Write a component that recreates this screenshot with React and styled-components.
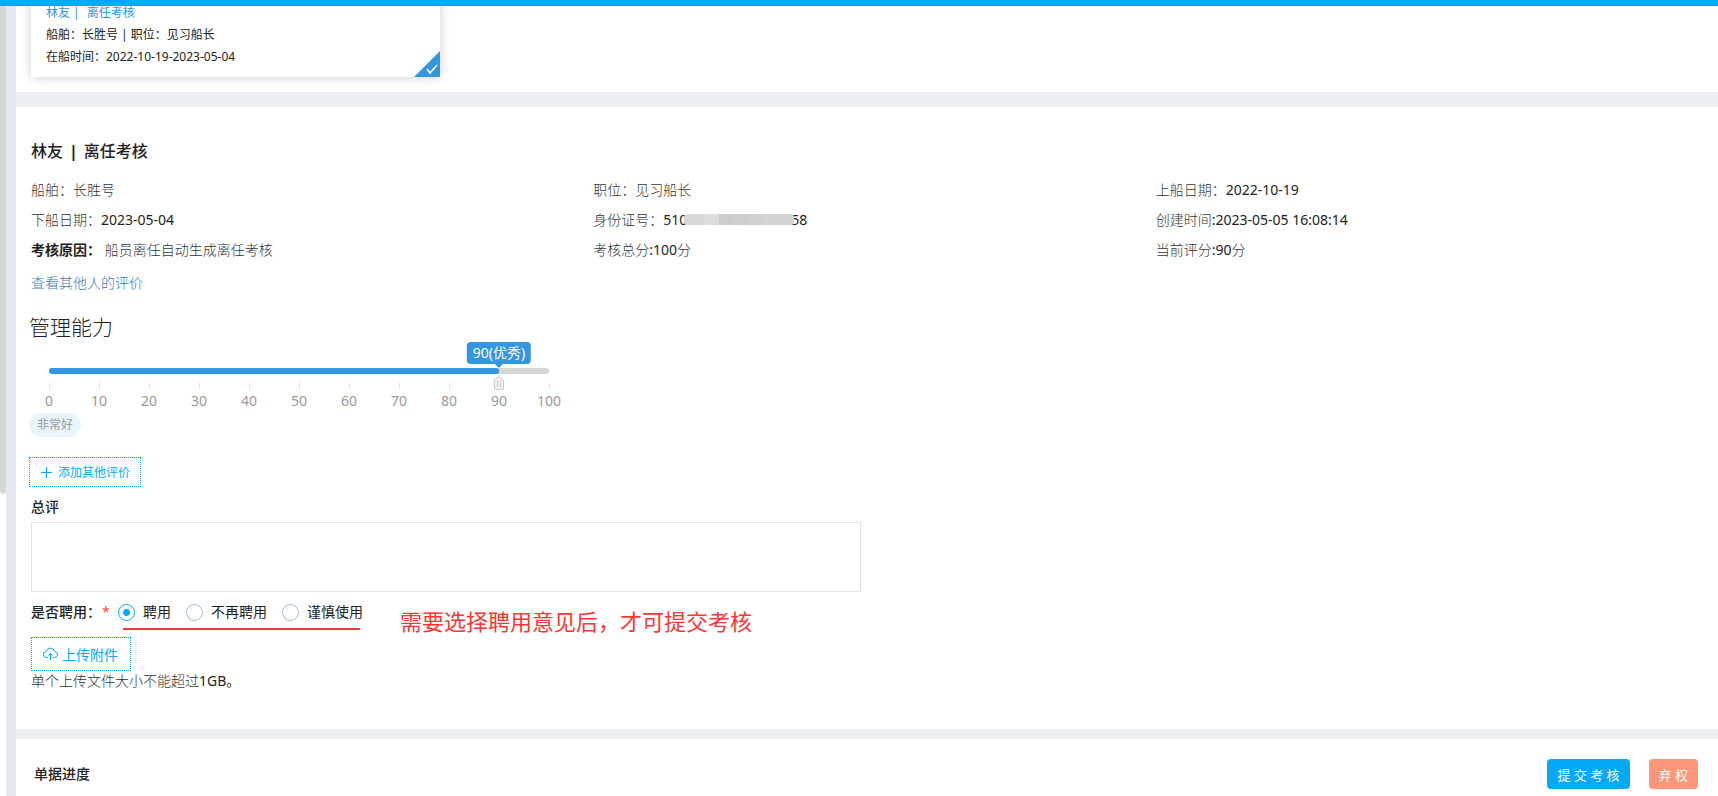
import React, { useState } from "react";
import styled, { createGlobalStyle } from "styled-components";

const GlobalStyle = createGlobalStyle`
  * {
    box-sizing: border-box;
  }
  body {
    margin: 0;
    background: #ebeff4;
    color: #222;
    font: 14px/30px "Noto Sans", "Noto Sans CJK SC", sans-serif;
  }
  button, input, textarea {
    font-family: inherit;
    margin: 0;
  }
`;

const TopBar = styled.div`
  position: fixed;
  top: 0;
  left: 0;
  right: 0;
  height: 6px;
  background: #03a9f4;
  z-index: 2;
`;

const Page = styled.div`
  display: flex;
  min-height: 100vh;
`;

const ScrollTrack = styled.div`
  flex: none;
  width: 6px;
  background: #fff;
`;

const ScrollThumb = styled.div`
  height: 62vh;
  border-radius: 0 0 3px 3px;
  background: #d6d6d6;
`;

const Main = styled.main`
  flex: 1;
  min-width: 0;
  display: flex;
  flex-direction: column;
  border-left: 10px solid #e5e9ef;
`;

const ListPanel = styled.section`
  background: #fff;
  padding: 0 15px 15px;
`;

const PersonCard = styled.div`
  position: relative;
  max-width: 409px;
  padding: 2px 15px 9px;
  background: #fff;
  box-shadow: 0 0 10px rgba(0, 0, 0, 0.2);
  font-size: 12px;
  line-height: 22px;
`;

const CardName = styled.div`
  display: flex;
  gap: 7px;
  color: #3296e1;
`;

const Corner = styled.svg`
  position: absolute;
  right: 0;
  bottom: 0;
`;

const DetailPanel = styled.section`
  margin-top: 15px;
  padding: 29px 0 38px 15px;
  background: #fff;
`;

const Title = styled.h1`
  display: flex;
  gap: 6px;
  margin: 0 0 9px;
  font-size: 16px;
  font-weight: 500;
  line-height: 30px;
`;

const Info = styled.div`
  display: grid;
  grid-template-columns: repeat(3, 1fr);
`;

const Label = styled.span`
  color: #333;
  font-weight: 300;
`;

const Mask = styled.span`
  display: inline-block;
  width: 110px;
  height: 11px;
  margin: 0 -3px;
  position: relative;
  border-radius: 4px;
  background: linear-gradient(
    90deg,
    #d6d8da 0 20px,
    #dcdedd 20px 35px,
    #cccccc 35px 50px,
    #d0cecd 50px 65px,
    #cfd1d3 65px 80px,
    #d3d3d4 80px
  );
`;

const OtherLink = styled.a`
  display: block;
  width: fit-content;
  margin-top: 3px;
  color: #3f78b5;
  font-weight: 300;
  text-decoration: none;
`;

const SkillTitle = styled.h2`
  margin: 14px 0 0 -2px;
  font-size: 21px;
  font-weight: 300;
  line-height: 30px;
`;

const Slider = styled.div`
  position: relative;
  width: 500px;
  max-width: 90%;
  margin: 26px 0 0 18px;
`;

const Rail = styled.div`
  height: 6px;
  border-radius: 3px;
  background: #d6d6d6;
`;

const Fill = styled.div`
  height: 6px;
  border-radius: 3px;
  background: #3296e1;
`;

const Bubble = styled.output`
  position: absolute;
  bottom: 100%;
  transform: translateX(-50%);
  margin-bottom: 4px;
  padding: 0 6px;
  border-radius: 4px;
  background: #3296e1;
  color: #fff;
  line-height: 22px;
  white-space: nowrap;

  &::after {
    content: "";
    position: absolute;
    left: 50%;
    top: 100%;
    margin-left: -4px;
    border: 4px solid transparent;
    border-top-color: #3296e1;
  }
`;

const BubbleTrack = styled.div`
  position: absolute;
  top: 0;
  left: 0;
  right: 0;
`;

const thumbSvg = encodeURIComponent(
  `<svg xmlns="http://www.w3.org/2000/svg" width="10" height="14"><path d="M.5 4.500 4 1h2l3.500 3.500v7.500a1.500 1.500 0 0 1-1.500 1.500H2A1.500 1.500 0 0 1 .5 12z" fill="#f4f4f4" stroke="#cacaca"/><path d="M3.500 4.500v6.500M6.500 4.500v6.500" stroke="#cacaca"/></svg>`
);

const Range = styled.input`
  appearance: none;
  position: absolute;
  top: 8px;
  left: -5px;
  width: calc(100% + 10px);
  height: 14px;
  background: transparent;
  cursor: pointer;

  &::-webkit-slider-thumb {
    appearance: none;
    width: 10px;
    height: 14px;
    background: url("data:image/svg+xml,${thumbSvg}");
  }
`;

const Scale = styled.div`
  display: flex;
  justify-content: space-between;
  margin-top: 9px;
`;

const Mark = styled.div`
  display: flex;
  flex-direction: column;
  align-items: center;
  width: 0;
  color: #999;
  line-height: 24px;

  &::before {
    content: "";
    flex: none;
    width: 1px;
    height: 6px;
    background: #e0e0e0;
  }
`;

const Tag = styled.span`
  display: block;
  width: fit-content;
  margin-left: -2px;
  padding: 0 8px;
  border-radius: 12px;
  background: #e9f5fc;
  color: #999;
  font-size: 12px;
  line-height: 24px;
`;

const DottedButton = styled.button`
  display: flex;
  align-items: center;
  gap: ${(props) => (props.$small ? "6px" : "4px")};
  height: ${(props) => (props.$small ? "30px" : "34px")};
  margin: ${(props) => (props.$small ? "20px 0 5px -2px" : "10px 0 0")};
  padding: ${(props) => (props.$small ? "0 10px 0 11px" : "0 12px 0 11px")};
  border: 1px dotted #03a9f4;
  background: #fff;
  color: #03a9f4;
  font-size: ${(props) => (props.$small ? "12px" : "14px")};
  cursor: pointer;
`;

const FieldLabel = styled.label`
  display: block;
  font-weight: 500;
`;

const Comment = styled.textarea`
  display: block;
  width: 100%;
  max-width: 830px;
  height: 70px;
  border: 1px solid #e0e3e7;
  resize: none;
`;

const HireRow = styled.div`
  position: relative;
  display: flex;
  align-items: center;
  height: 30px;
  margin-top: 5px;
`;

const Star = styled.span`
  width: 16px;
  color: #f0513c;
`;

const HireLabel = styled.span`
  width: 71px;
  font-weight: 500;
`;

const Option = styled.label`
  display: flex;
  align-items: center;
  gap: 8px;
  margin-right: 15px;
`;

const Radio = styled.input`
  appearance: none;
  width: 17px;
  height: 17px;
  border: 1px solid #9db9d6;
  border-radius: 50%;

  &:checked {
    border-color: #03a9f4;
    background: radial-gradient(circle, #03a9f4 3px, transparent 4px);
  }
`;

const Underline = styled.div`
  position: absolute;
  left: 92px;
  top: 31px;
  width: 237px;
  height: 2px;
  background: #ff3535;
`;

const Note = styled.div`
  position: absolute;
  left: 369px;
  top: 9px;
  color: #ff3535;
  font-size: 22px;
  white-space: nowrap;
`;

const Hint = styled.p`
  margin: 0;
  line-height: 20px;
`;

const Footer = styled.footer`
  flex: 1;
  display: flex;
  align-items: flex-start;
  gap: 19px;
  margin-top: 10px;
  padding: 20px 20px 8px 18px;
  background: #fff;
`;

const FooterTitle = styled.h3`
  flex: 1;
  margin: 0;
  font-size: 14px;
  font-weight: 500;
`;

const ActionButton = styled.button`
  height: 30px;
  padding: 0 10px;
  border: 0;
  border-radius: 4px;
  background: ${(props) => props.$color};
  color: #fff;
  font-size: 13px;
  cursor: pointer;
`;

const marks = [0, 10, 20, 30, 40, 50, 60, 70, 80, 90, 100];
const hireOptions = ["聘用", "不再聘用", "谨慎使用"];

function ScoreSlider() {
  const [score, setScore] = useState(90);

  return (
    <Slider>
      <Rail>
        <Fill style={{ width: `${score}%` }} />
      </Rail>
      <BubbleTrack>
        <Bubble style={{ left: `${score}%` }}>{score}(优秀)</Bubble>
      </BubbleTrack>
      <Range
        type="range"
        aria-label="管理能力"
        value={score}
        onChange={(e) => setScore(Number(e.target.value))}
      />
      <Scale>
        {marks.map((mark) => (
          <Mark key={mark}>{mark}</Mark>
        ))}
      </Scale>
    </Slider>
  );
}

function App() {
  const [hire, setHire] = useState("聘用");

  return (
    <>
      <GlobalStyle />
      <TopBar />
      <Page>
        <ScrollTrack>
          <ScrollThumb />
        </ScrollTrack>
        <Main>
          <ListPanel>
            <PersonCard>
              <CardName>
                <span>林友 |</span>
                <span>离任考核</span>
              </CardName>
              <div>船舶：长胜号 | 职位：见习船长</div>
              <div>在船时间：2022-10-19-2023-05-04</div>
              <Corner width="26" height="26" viewBox="0 0 26 26">
                <path d="M26 0v26H0z" fill="#3296e1" />
                <path d="m13 18 3 4 7-8" fill="none" stroke="#fff" strokeWidth="1.5" />
              </Corner>
            </PersonCard>
          </ListPanel>

          <DetailPanel>
            <Title>
              <span>林友</span>
              <b>|</b>
              <span>离任考核</span>
            </Title>
            <Info>
              <Label>船舶：长胜号</Label>
              <Label>职位：见习船长</Label>
              <div>
                <Label>上船日期：</Label>2022-10-19
              </div>
              <div>
                <Label>下船日期：</Label>2023-05-04
              </div>
              <div>
                <Label>身份证号：</Label>510
                <Mask />
                58
              </div>
              <div>
                <Label>创建时间</Label>:2023-05-05 16:08:14
              </div>
              <div>
                <b>考核原因：</b> <Label>船员离任自动生成离任考核</Label>
              </div>
              <div>
                <Label>考核总分</Label>:100<Label>分</Label>
              </div>
              <div>
                <Label>当前评分</Label>:90<Label>分</Label>
              </div>
            </Info>
            <OtherLink href="#">查看其他人的评价</OtherLink>

            <SkillTitle>管理能力</SkillTitle>
            <ScoreSlider />
            <Tag>非常好</Tag>
            <DottedButton type="button" $small>
              <svg width="11" height="11" viewBox="0 0 11 11">
                <path d="M5.500 0v11M0 5.500h11" stroke="#03a9f4" />
              </svg>
              添加其他评价
            </DottedButton>

            <FieldLabel htmlFor="comment">总评</FieldLabel>
            <Comment id="comment" />

            <HireRow role="radiogroup" aria-label="是否聘用">
              <HireLabel>是否聘用：</HireLabel>
              <Star>*</Star>
              {hireOptions.map((option) => (
                <Option key={option}>
                  <Radio
                    type="radio"
                    name="hire"
                    checked={hire === option}
                    onChange={() => setHire(option)}
                  />
                  {option}
                </Option>
              ))}
              <Underline />
              <Note>需要选择聘用意见后，才可提交考核</Note>
            </HireRow>

            <DottedButton type="button">
              <svg width="15" height="14" viewBox="0 0 15 14" fill="none" stroke="#03a9f4">
                <path d="M5 10.500H3.500a3 3 0 0 1-.3-6 4.300 4.300 0 0 1 8.400 0 3 3 0 0 1-.1 6H10" />
                <path d="M7.500 13V6.500M5.500 8.500l2-2 2 2" />
              </svg>
              上传附件
            </DottedButton>
            <Hint>
              <Label>单个上传文件大小不能超过</Label>1GB。
            </Hint>
          </DetailPanel>

          <Footer>
            <FooterTitle>单据进度</FooterTitle>
            <ActionButton type="button" $color="#03a9f4">
              提 交 考 核
            </ActionButton>
            <ActionButton type="button" $color="#fc967a">
              弃 权
            </ActionButton>
          </Footer>
        </Main>
      </Page>
    </>
  );
}

export default App;
